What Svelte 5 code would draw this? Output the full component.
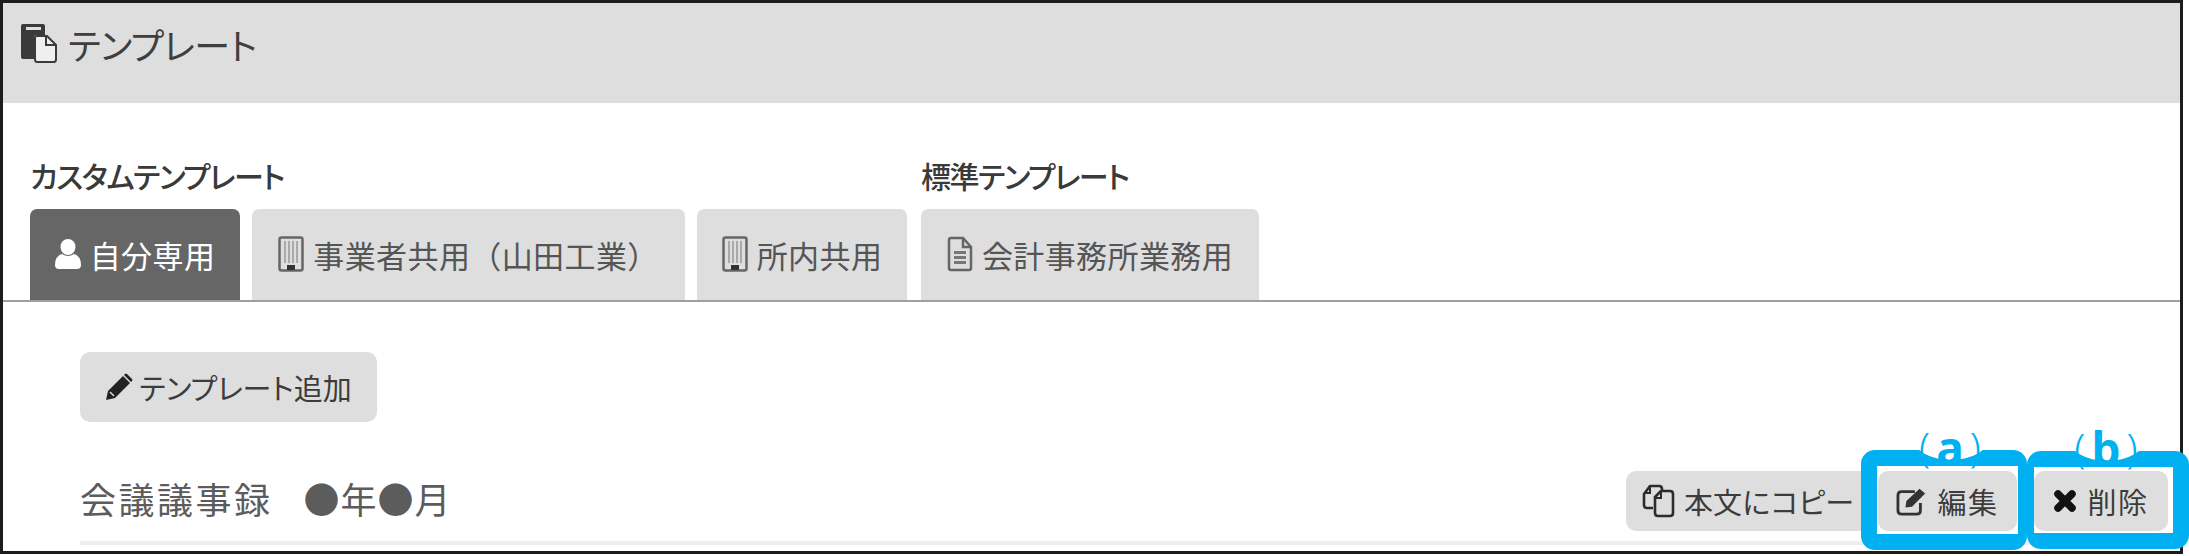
<script lang="ts">
  const tabsCustom = [
    { id: 'self', label: '自分専用', icon: 'user', width: 210, active: true },
    { id: 'company', label: '事業者共用（山田工業）', icon: 'building', width: 433, active: false },
    { id: 'office', label: '所内共用', icon: 'building', width: 210, active: false }
  ];
</script>

<div class="page">
  <div class="frame">
    <header class="title">
      <svg class="title-icon" viewBox="0 0 38 40" aria-hidden="true">
        <path d="M1 3q0-2 2-2h20q2 0 2 2v9h-8q-3 0-3 3v21H3q-2 0-2-2z" fill="#3a3a3a" />
        <rect x="6" y="4" width="15" height="3" fill="#dedede" />
        <path d="M15 36V15q0-2 2-2h10l9 9v14q0 3-2 3H17q-2 0-2-3z" fill="#efefef" stroke="#3a3a3a" stroke-width="2" />
        <path d="M26 13v9h10" fill="none" stroke="#3a3a3a" stroke-width="2" />
      </svg>
      <span class="kana title-text">テンプレート</span>
    </header>

    <div class="tabs">
      <section class="group">
        <h2 class="kana group-label">カスタムテンプレート</h2>
        <div class="tab-row">
          {#each tabsCustom as tab (tab.id)}
            <div class="tab" class:active={tab.active} style="width: {tab.width}px">
              {#if tab.icon === 'user'}
                <svg class="tab-icon user" viewBox="0 0 26 30" aria-hidden="true">
                  <ellipse cx="13" cy="8" rx="7.5" ry="8" fill="#fff" />
                  <path d="M0 26q0-9 7-11 6 4 12 0 7 2 7 11 0 4-4 4H4q-4 0-4-4z" fill="#fff" />
                </svg>
              {:else}
                <svg class="tab-icon" viewBox="0 0 26 36" aria-hidden="true">
                  <rect x="1.5" y="1.5" width="23" height="33" rx="2" fill="#dedede" stroke="#666" stroke-width="2.5" />
                  <path d="M7 5v22M11 5v22M15 5v22M19 5v22" stroke="#aaa" stroke-width="2" />
                  <path d="M9 34v-5h8v5z" fill="#333" />
                </svg>
              {/if}
              <span>{tab.label}</span>
            </div>
          {/each}
        </div>
      </section>
      <section class="group">
        <h2 class="kana group-label">標準テンプレート</h2>
        <div class="tab-row">
          <div class="tab standard">
            <svg class="tab-icon" viewBox="0 0 26 36" aria-hidden="true">
              <path d="M2 32V4q0-2 2-2h12l8 9v21q0 2-2 2H4q-2 0-2-2z" fill="#dedede" stroke="#666" stroke-width="2.5" />
              <path d="M16 2v9h8" fill="none" stroke="#666" stroke-width="2.5" />
              <path d="M7 15h12v3H7zM7 20h12v3H7zM7 25h12v3H7z" fill="#777" />
            </svg>
            <span>会計事務所業務用</span>
          </div>
        </div>
      </section>
    </div>

    <div class="content">
      <button class="btn add">
        <svg class="btn-icon pencil" viewBox="0 0 28 28" aria-hidden="true">
          <path d="M1 27l2-9L18 3l7 7-15 15z" fill="#222" />
          <path d="M20 1q1-1 2 0l5 5q1 1 0 2l-1 1-7-7z" fill="#222" />
          <path d="M5 19l4 4" stroke="#dedede" stroke-width="1.5" />
        </svg>
        <span class="kana">テンプレート</span><span>追加</span>
      </button>

      <div class="item">
        <h3 class="item-title">会議議事録<span class="date">●年●月</span></h3>
        <div class="actions">
          <button class="btn copy">
            <svg class="btn-icon" viewBox="0 0 34 34" aria-hidden="true">
              <path d="M11 24H5q-3 0-3-3V10l6-8h9q3 0 3 3v2" fill="none" stroke="#2c2c2c" stroke-width="2.6" stroke-linejoin="round" />
              <path d="M8 3v6h-5" fill="none" stroke="#2c2c2c" stroke-width="2" />
              <path d="M13 29V13l6-6h9q3 0 3 3v19q0 3-3 3H16q-3 0-3-3z" fill="#dedede" stroke="#2c2c2c" stroke-width="2.6" stroke-linejoin="round" />
              <path d="M19 8v6h-5" fill="none" stroke="#2c2c2c" stroke-width="2" />
            </svg>
            <span>本文に</span><span class="kana">コピー</span>
          </button>
          <button class="btn edit">
            <svg class="btn-icon" viewBox="0 0 34 32" aria-hidden="true">
              <path d="M26 18v8q0 4-4 4H6q-4 0-4-4V10q0-4 4-4h14" fill="none" stroke="#333" stroke-width="3" />
              <path d="M10 23l1-7L25 3l6 5-14 14z" fill="#333" />
            </svg>
            <span>編集</span>
          </button>
          <button class="btn del">
            <svg class="btn-icon" viewBox="0 0 24 24" aria-hidden="true">
              <path d="M5 5l14 14M19 5L5 19" stroke="#111" stroke-width="7.5" stroke-linecap="round" />
            </svg>
            <span>削除</span>
          </button>
        </div>
      </div>
    </div>
  </div>

  <div class="mark mark-a"><span class="notch"></span><span class="mark-label">(<b>a</b>)</span></div>
  <div class="mark mark-b"><span class="notch"></span><span class="mark-label">(<b>b</b>)</span></div>
</div>

<style>
  :global(body) {
    margin: 0;
    background: #fff;
  }
  .page {
    position: relative;
    width: 2189px;
    height: 556px;
    overflow: hidden;
    font-family: "Noto Sans CJK JP", "Noto Sans", sans-serif;
    color: #4a4a4a;
  }
  .frame {
    box-sizing: border-box;
    width: 2183px;
    height: 554px;
    border: 3px solid #1c1c1c;
    display: flex;
    flex-direction: column;
  }
  .kana {
    font-feature-settings: "palt";
  }
  .title {
    height: 100px;
    flex: none;
    background: #dedede;
    display: flex;
    align-items: flex-start;
    gap: 10px;
    padding: 17px 0 0 17px;
    box-sizing: border-box;
  }
  .title-icon {
    width: 38px;
    height: 40px;
    flex: none;
    margin-top: 3px;
  }
  .title-text {
    font-size: 36px;
    line-height: 48px;
    letter-spacing: -0.5px;
    color: #3f3f3f;
  }
  .tabs {
    display: flex;
    gap: 14px;
    padding: 54px 0 0 27px;
    border-bottom: 2px solid #a0a0a0;
    height: 199px;
    box-sizing: border-box;
    flex: none;
  }
  .group-label {
    margin: 0 0 16px;
    font-size: 30px;
    line-height: 36px;
    font-weight: 500;
    letter-spacing: -1.5px;
    color: #3a3a3a;
  }
  .tab-row {
    display: flex;
    gap: 12px;
  }
  .tab {
    box-sizing: border-box;
    height: 91px;
    background: #dedede;
    border-radius: 7px 7px 0 0;
    display: flex;
    align-items: center;
    justify-content: center;
    gap: 9px;
    padding-bottom: 1px;
    font-size: 31px;
    letter-spacing: 0.4px;
    color: #555;
    white-space: nowrap;
  }
  .tab.active {
    background: #666;
    color: #fff;
  }
  .tab.standard {
    width: 338px;
  }
  .tab-icon {
    width: 26px;
    height: 36px;
    flex: none;
  }
  .tab-icon.user {
    height: 30px;
  }
  .content {
    flex: 1;
    padding: 50px 0 0 77px;
    display: flex;
    flex-direction: column;
    align-items: flex-start;
  }
  .btn {
    border: 0;
    background: #dedede;
    border-radius: 10px;
    display: flex;
    align-items: center;
    justify-content: center;
    font: inherit;
    font-size: 29px;
    color: #3c3c3c;
    padding: 0;
    white-space: nowrap;
  }
  .btn.add {
    width: 297px;
    height: 70px;
    gap: 6px;
  }
  .btn.add span + span {
    margin-left: -6px;
  }
  .btn-icon {
    flex: none;
  }
  .pencil {
    width: 28px;
    height: 28px;
  }
  .item {
    align-self: stretch;
    box-sizing: border-box;
    margin-top: 49px;
    margin-right: 12px;
    height: 74px;
    border-bottom: 4px solid #eee;
    display: flex;
    justify-content: space-between;
    align-items: flex-start;
  }
  .item-title {
    margin: 1px 0 0;
    font-size: 36px;
    line-height: 52px;
    font-weight: 400;
    letter-spacing: 2.5px;
    color: #5c5c5c;
  }
  .date {
    margin-left: 31px;
    letter-spacing: 1px;
  }
  .actions {
    display: flex;
    gap: 8px;
  }
  .actions .btn {
    height: 60px;
  }
  .btn.copy {
    width: 244px;
    gap: 8px;
  }
  .btn.copy span + span {
    margin-left: -8px;
  }
  .btn.copy .btn-icon {
    width: 34px;
    height: 34px;
  }
  .btn.edit {
    width: 139px;
    gap: 9px;
    letter-spacing: 1.5px;
  }
  .btn.edit .btn-icon {
    width: 32px;
    height: 30px;
  }
  .btn.del {
    width: 134px;
    gap: 10px;
    margin-left: 9px;
    letter-spacing: 1.5px;
  }
  .btn.del .btn-icon {
    width: 24px;
    height: 24px;
  }
  .mark {
    position: absolute;
    box-sizing: border-box;
    border: 16px solid #00b0f0;
    border-radius: 14px;
  }
  .mark-a {
    left: 1861px;
    top: 450px;
    width: 166px;
    height: 100px;
    border-right-width: 9px;
  }
  .mark-b {
    left: 2027px;
    top: 451px;
    width: 162px;
    height: 98px;
    border-left-width: 7px;
  }
  .notch {
    position: absolute;
    left: 36px;
    top: -28px;
    width: 76px;
    height: 22px;
    background: #fff;
    border-radius: 0 0 38px 38px / 0 0 22px 22px;
  }
  .mark-b .notch {
    left: 35px;
  }
  .mark-label {
    position: absolute;
    left: 73px;
    top: -44px;
    height: 50px;
    transform: translateX(-50%);
    display: flex;
    align-items: center;
    color: #00b0f0;
    font-family: "Noto Sans", sans-serif;
    font-weight: 300;
    font-size: 40px;
    line-height: 50px;
    white-space: nowrap;
  }
  .mark-b .mark-label {
    left: 72px;
  }
  .mark-label b {
    font-weight: 700;
    font-size: 46px;
    margin: 0 6px;
  }
</style>
